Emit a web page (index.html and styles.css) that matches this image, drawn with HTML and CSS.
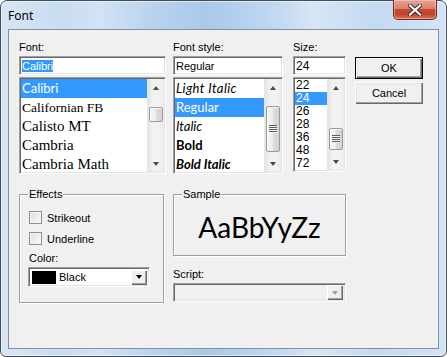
FILE: index.html
```html
<!DOCTYPE html>
<html lang="en">
<head>
  <meta charset="UTF-8" />
  <title>Font</title>
  <link rel="stylesheet" href="styles.css">
</head>
<body>

  <div class="window">
    <div class="titlebar">
      <span class="title">Font</span>
      <button class="close-btn">
        <svg width="14" height="12" viewBox="0 0 14 12">
          <path d="M2 1.5 L12 10.5 M12 1.5 L2 10.5" stroke="#3c2a26" stroke-width="4.2" stroke-linecap="square" fill="none" />
          <path d="M2 1.5 L12 10.5 M12 1.5 L2 10.5" stroke="#fff" stroke-width="2.2" stroke-linecap="square" fill="none" />
        </svg>
      </button>
    </div>

    <div class="client">
      <div class="top">
        <div class="col col-font">
          <label class="lbl">Font:</label>
          <div class="field"><span class="sel-text">Calibri</span></div>
          <div class="list list-font">
            <div class="items">
              <div class="item selected f-calibri">Calibri</div>
              <div class="item f-californian">Californian FB</div>
              <div class="item f-serif">Calisto MT</div>
              <div class="item f-serif">Cambria</div>
              <div class="item f-serif">Cambria Math</div>
            </div>
            <div class="scrollbar">
              <div class="arrow"><span class="tri-up"></span></div>
              <div class="track"><div class="thumb thumb-font"></div></div>
              <div class="arrow"><span class="tri-down"></span></div>
            </div>
          </div>
        </div>

        <div class="col col-style">
          <label class="lbl">Font style:</label>
          <div class="field">Regular</div>
          <div class="list list-style">
            <div class="items">
              <div class="item s-light">Light Italic</div>
              <div class="item selected">Regular</div>
              <div class="item s-italic">Italic</div>
              <div class="item s-bold">Bold</div>
              <div class="item s-bold-italic">Bold Italic</div>
            </div>
            <div class="scrollbar">
              <div class="arrow"><span class="tri-up"></span></div>
              <div class="track"><div class="thumb thumb-style"><span class="grip"></span></div></div>
              <div class="arrow"><span class="tri-down"></span></div>
            </div>
          </div>
        </div>

        <div class="col col-size">
          <label class="lbl">Size:</label>
          <div class="field size-field">24</div>
          <div class="list list-size">
            <div class="items">
              <div class="item">22</div>
              <div class="item selected">24</div>
              <div class="item">26</div>
              <div class="item">28</div>
              <div class="item">36</div>
              <div class="item">48</div>
              <div class="item">72</div>
            </div>
            <div class="scrollbar">
              <div class="arrow"><span class="tri-up"></span></div>
              <div class="track"><div class="thumb thumb-size"><span class="grip"></span></div></div>
              <div class="arrow"><span class="tri-down"></span></div>
            </div>
          </div>
        </div>

        <div class="col col-buttons">
          <button class="btn btn-default">OK</button>
          <button class="btn">Cancel</button>
        </div>
      </div>

      <div class="bottom">
        <div class="group effects">
          <span class="legend">Effects</span>
          <div class="check-row"><span class="checkbox"></span>Strikeout</div>
          <div class="check-row"><span class="checkbox"></span>Underline</div>
          <label class="lbl color-lbl">Color:</label>
          <div class="combo color-combo">
            <span class="swatch"></span>
            <span class="combo-text">Black</span>
            <span class="drop-btn"><span class="tri-down"></span></span>
          </div>
        </div>

        <div class="col-sample">
          <div class="group sample">
            <span class="legend">Sample</span>
            <span class="sample-text">AaBbYyZz</span>
          </div>
          <label class="lbl script-lbl">Script:</label>
          <div class="combo script-combo">
            <span class="drop-btn disabled"><span class="tri-down"></span></span>
          </div>
        </div>
      </div>
    </div>
  </div>

</body>
</html>
```

FILE: styles.css
```css
* {
  box-sizing: border-box;
}
body {
  margin: 0;
  background: #fff;
  font-family: "Liberation Sans", Arial, sans-serif;
  font-size: 11px;
  color: #000;
}
.window {
  width: 447px;
  height: 357px;
  border: 1px solid #434d58;
  border-radius: 7px 7px 6px 6px;
  padding: 0 7px 7px;
  display: flex;
  flex-direction: column;
  background: linear-gradient(90deg, #d7e6f6 0%, #c8dcf1 14%, #d2e3f5 22%, #b9d3ee 34%, #aac9e8 46%, #b7d2ee 56%, #c6dbf2 64%, #d6e6f6 70%, #c4daf1 84%, #d3e4f6 100%);
  box-shadow: inset 0 0 0 1px rgba(255, 255, 255, 0.55);
}
.titlebar {
  height: 28px;
  display: flex;
  justify-content: space-between;
  align-items: flex-start;
}
.title {
  font-family: "Noto Sans", sans-serif;
  font-size: 12px;
  line-height: 17px;
  margin-top: 6px;
}
.close-btn {
  width: 44px;
  height: 20px;
  margin: -1px 2px 0 0;
  padding: 0;
  border: 1px solid #6e2a20;
  border-top: none;
  border-radius: 0 0 5px 5px;
  background: linear-gradient(#e8a597 0%, #d9806c 45%, #c74a30 50%, #c2432a 75%, #d8775c 100%);
  box-shadow: inset 0 0 0 1px rgba(255, 220, 210, 0.45);
  display: flex;
  align-items: center;
  justify-content: center;
}
.client {
  flex: 1;
  background: #f0f0f0;
  border: 1px solid #84919e;
  padding: 10px 0 0 10px;
}

/* top row */
.top {
  display: flex;
}
.col {
  display: flex;
  flex-direction: column;
}
.col-font {
  width: 147px;
}
.col-style {
  width: 110px;
  margin-left: 7px;
}
.col-size {
  width: 53px;
  margin-left: 10px;
}
.col-buttons {
  width: 68px;
  margin-left: 9px;
  padding-top: 17px;
  gap: 3px;
}
.lbl {
  display: block;
  height: 14px;
  line-height: 14px;
  margin-bottom: 2px;
}
.field {
  height: 19px;
  background: #fff;
  border: 1px solid;
  border-color: #a0a0a0 #fff #fff #a0a0a0;
  box-shadow: inset 1px 1px #696969, inset -1px -1px #e3e3e3;
  padding: 0 2px;
  display: flex;
  align-items: center;
}
.size-field {
  font-size: 12px;
}
.sel-text {
  background: #3399ff;
  color: #fff;
  line-height: 12px;
}
.list {
  margin-top: 2px;
  height: 97px;
  background: #fff;
  border: 1px solid;
  border-color: #a0a0a0 #fff #fff #a0a0a0;
  box-shadow: inset 1px 1px #696969, inset -1px -1px #e3e3e3;
  padding: 1px;
  display: flex;
  overflow: hidden;
}
.list-size {
  height: 95px;
}
.items {
  flex: 1;
  overflow: hidden;
}
.item {
  height: 19px;
  line-height: 19px;
  padding-left: 1px;
  white-space: nowrap;
}
.item.selected {
  background: #3399ff;
  color: #fff;
}
.f-calibri,
.list-style .item {
  font-family: Lato, "Open Sans", sans-serif;
  font-size: 13px;
}
.f-californian {
  font-family: "Liberation Serif", serif;
  font-size: 13.5px;
}
.f-serif {
  font-family: "Liberation Serif", serif;
  font-size: 15px;
}
.list-style .s-light {
  font-style: italic;
  letter-spacing: 0.4px;
}
.list-style .s-italic {
  font-style: italic;
}
.list-style .s-bold {
  font-weight: bold;
}
.list-style .s-bold-italic {
  font-weight: bold;
  font-style: italic;
}
.list-size .item {
  height: 13px;
  line-height: 13px;
  font-size: 12px;
}

/* scrollbars */
.scrollbar {
  width: 17px;
  display: flex;
  flex-direction: column;
  background: linear-gradient(90deg, #e4e4e4, #f2f2f2 30%, #f2f2f2 70%, #ebebeb);
  border-left: 1px solid #e6e6e6;
}
.arrow {
  height: 17px;
  display: flex;
  align-items: center;
  justify-content: center;
}
.tri-up,
.tri-down {
  width: 1px;
  height: 0;
  border-left: 3px solid transparent;
  border-right: 3px solid transparent;
}
.tri-up {
  border-bottom: 4px solid #4a4a4a;
}
.tri-down {
  border-top: 4px solid #4a4a4a;
}
.track {
  flex: 1;
}
.thumb {
  margin: 0 1px;
  border: 1px solid #9a9a9a;
  border-radius: 2px;
  background: linear-gradient(90deg, #f6f6f6, #ececec 45%, #dcdcdc 55%, #d2d2d2);
  box-shadow: inset 1px 1px rgba(255, 255, 255, 0.8);
  display: flex;
  align-items: center;
  justify-content: center;
}
.thumb-font {
  margin-top: 11px;
  height: 15px;
}
.thumb-style {
  margin-top: 10px;
  height: 46px;
}
.thumb-size {
  margin-top: 32px;
  height: 22px;
}
.grip {
  width: 8px;
  height: 8px;
  background: repeating-linear-gradient(#5c5c5c 0 1px, #f4f4f4 1px 2px);
}

/* buttons */
.btn {
  height: 22px;
  padding: 0;
  font: inherit;
  background: #f0f0f0;
  border: none;
  box-shadow: inset 1px 1px #fff, inset -1px -1px #696969, inset -2px -2px #a0a0a0, inset 2px 2px #e3e3e3;
}
.btn-default {
  border: 1px solid #000;
}

/* bottom row */
.bottom {
  display: flex;
  margin-top: 20px;
}
.group {
  position: relative;
  border: 1px solid #a0a0a0;
  box-shadow: inset 1px 1px #fff, 1px 1px #fff;
}
.legend {
  position: absolute;
  top: -8px;
  left: 8px;
  padding: 0 1px;
  line-height: 14px;
  background: #f0f0f0;
}
.effects {
  width: 145px;
  height: 109px;
  padding: 16px 0 0 9px;
}
.check-row {
  display: flex;
  align-items: center;
  gap: 5px;
  height: 13px;
  margin-bottom: 8px;
}
.checkbox {
  width: 13px;
  height: 13px;
  border: 1px solid #8e8f8f;
  background: linear-gradient(135deg, #dedede, #fbfbfb);
  box-shadow: inset 0 0 0 1px #f4f4f4;
}
.color-lbl {
  margin-top: -2px;
  margin-bottom: 2px;
}
.combo {
  height: 20px;
  background: #fff;
  border: 1px solid;
  border-color: #a0a0a0 #fff #fff #a0a0a0;
  box-shadow: inset 1px 1px #696969, inset -1px -1px #e3e3e3;
  padding: 2px 2px 2px 3px;
  display: flex;
  align-items: center;
}
.color-combo {
  width: 122px;
  margin-left: -1px;
}
.swatch {
  width: 24px;
  height: 13px;
  background: #000;
}
.combo-text {
  flex: 1;
  margin-left: 3px;
}
.drop-btn {
  width: 16px;
  height: 15px;
  margin-left: auto;
  background: #f0f0f0;
  box-shadow: inset 1px 1px #fff, inset -1px -1px #696969, inset -2px -2px #a0a0a0;
  display: flex;
  align-items: center;
  justify-content: center;
}
.drop-btn .tri-down {
  border-top-color: #000;
}
.drop-btn.disabled .tri-down {
  border-top-color: #a0a0a0;
}
.col-sample {
  width: 173px;
  margin-left: 9px;
}
.sample {
  height: 62px;
  padding-top: 17px;
  text-align: center;
}
.sample-text {
  font-family: Lato, "Open Sans", sans-serif;
  font-size: 28px;
  line-height: 30px;
}
.script-lbl {
  margin-top: 11px;
  margin-bottom: 2px;
}
.script-combo {
  height: 19px;
  background: #f0f0f0;
}
```
